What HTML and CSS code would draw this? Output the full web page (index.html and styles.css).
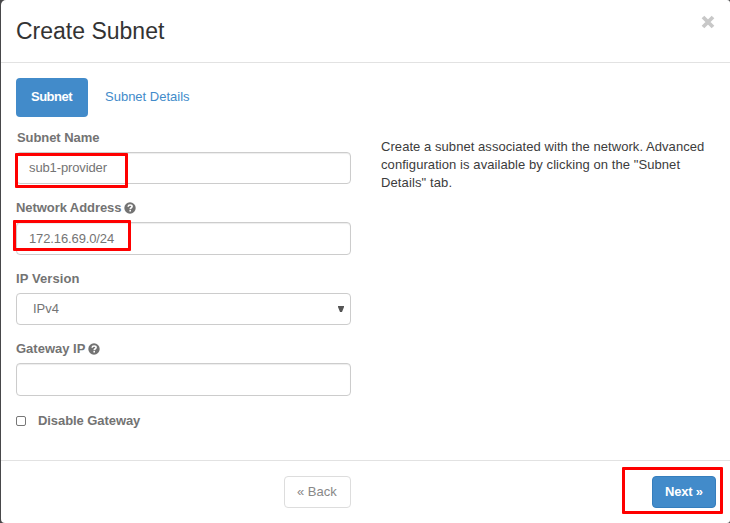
FILE: index.html
```html
<!DOCTYPE html>
<html lang="en">
<head>
<meta charset="utf-8">
<title>Create Subnet</title>
<link rel="stylesheet" href="styles.css">
</head>
<body>
<svg class="defs" width="0" height="0" aria-hidden="true">
  <symbol id="help" viewBox="0 0 12 12">
    <circle cx="6" cy="6" r="5.7" fill="currentColor"/>
    <path d="M4.100 4.700C4.200 3.500 5 3 6.100 3c1.200 0 2 .7 2 1.600C8.100 5.900 6.200 5.700 6.200 7.200M6.200 8v1.500" fill="none" stroke="#fff" stroke-width="1.600"/>
  </symbol>
</svg>
<div class="modal">
  <header class="modal-header">
    <h1 class="title"><span>Create Subnet</span></h1>
    <svg class="close" viewBox="0 0 14 14" role="img"><path d="M2 2l10 10M12 2l-10 10"/></svg>
  </header>
  <main class="modal-body">
    <nav class="tabs">
      <a class="tab active"><span>Subnet</span></a>
      <a class="tab"><span>Subnet Details</span></a>
    </nav>
    <div class="columns">
      <form class="form">
        <div class="group">
          <label class="label first"><span class="t-name">Subnet Name</span></label>
          <div class="field"><span class="t-sub">sub1-provider</span><i class="mark mark-name"></i></div>
        </div>
        <div class="group tall">
          <label class="label"><span class="t-net">Network Address</span><svg class="help"><use href="#help"/></svg></label>
          <div class="field addr"><span class="t-addr">172.16.69.0/24</span><i class="mark mark-addr"></i></div>
        </div>
        <div class="group">
          <label class="label"><span class="t-ver">IP Version</span></label>
          <div class="field select"><span class="t-ipv">IPv4</span><svg class="arrow" viewBox="0 0 6 6"><path d="M0 0h6v1L4 6H2L0 1z"/></svg></div>
        </div>
        <div class="group tall">
          <label class="label"><span class="t-gw">Gateway IP</span><svg class="help"><use href="#help"/></svg></label>
          <div class="field"></div>
        </div>
        <div class="check"><i class="box"></i><span class="t-dis">Disable Gateway</span></div>
      </form>
      <div class="info">
        <div><span class="t-i1">Create a subnet associated with the network. Advanced</span></div>
        <div><span class="t-i2">configuration is available by clicking on the "Subnet</span></div>
        <div><span class="t-i3">Details" tab.</span></div>
      </div>
    </div>
  </main>
  <footer class="modal-footer">
    <div class="btn back"><span>« Back</span></div>
    <div class="btn next"><span class="t-next">Next »</span><i class="mark mark-next"></i></div>
  </footer>
</div>
</body>
</html>
```
FILE: styles.css
```css
* { box-sizing: border-box; }
body {
  margin: 0;
  height: 523px;
  overflow: hidden;
  background: #48484a;
  font: 13px/18px "Liberation Sans", Arial, sans-serif;
  color: #3c3c3c;
}
span { white-space: nowrap; }
.defs { position: absolute; }
.modal {
  margin-left: 1px;
  height: 523px;
  background: #fff;
  border-radius: 5px 3px 3px 4px;
  display: flex;
  flex-direction: column;
}
.modal-header {
  height: 63px;
  flex: none;
  display: flex;
  justify-content: space-between;
  padding: 15px 15px 0 15px;
  border-bottom: 1px solid #e2e2e2;
}
.title { margin: 0; font-size: 23px; line-height: 32px; font-weight: 400; color: #333; }
.close { width: 14px; height: 14px; stroke: #c8c8c8; stroke-width: 3.8; fill: none; }
.modal-body { height: 397px; flex: none; padding: 15px 15px 0; }
.tabs { display: flex; gap: 2px; height: 39px; }
.tab { color: #428bca; padding: 10px 15px; border-radius: 4px; }
.tab.active { width: 72px; background: #428bca; color: #fff; font-weight: 700; letter-spacing: -.5px; }
.columns { display: flex; gap: 30px; }
.form { width: 335px; padding-top: 12px; }
.group { height: 70px; }
.group.tall { height: 71px; }
.label { display: flex; align-items: center; height: 23px; padding-bottom: 5px; font-weight: 700; color: #737373; }
.label.first { padding-left: 1px; }
.help { width: 12px; height: 12px; margin-left: 3px; }
.field {
  position: relative;
  display: flex;
  align-items: center;
  height: 32px;
  padding: 0 12px 1px;
  border: 1px solid #ccc;
  border-radius: 4px;
  box-shadow: inset 0 1px 1px rgba(0,0,0,.075);
  color: #747474;
}
.tall .field { height: 33px; }
.field.addr { padding: 1px 12px 0; }
.select { padding: 0 6px 0 16px; justify-content: space-between; box-shadow: none; }
.arrow { width: 6px; height: 6px; fill: #555; }
.check { display: flex; align-items: center; height: 18px; margin-top: 1px; font-weight: 700; color: #737373; }
.box { width: 10px; height: 10px; border: 1px solid #777; border-radius: 2px; margin: -1px 12px 0 0; }
.info { padding-top: 21px; }
.t-name, .t-net, .t-dis { letter-spacing: -.07px; }
.t-sub, .t-addr { letter-spacing: -.12px; }
.t-ver { letter-spacing: .1px; }
.t-i1 { letter-spacing: .06px; }
.t-i2 { letter-spacing: .075px; }
.t-i3 { letter-spacing: .12px; }
.t-next { letter-spacing: -.2px; }
.modal-footer {
  height: 63px;
  border-top: 1px solid #e2e2e2;
  display: flex;
  justify-content: space-between;
  padding: 15px 14px 0 283px;
}
.btn {
  position: relative;
  height: 32px;
  padding: 6px 12px;
  border: 1px solid #ddd;
  border-radius: 4px;
  color: #888;
}
.back { width: 67px; }
.next { width: 64px; background: #428bca; border-color: #357ebd; color: #fff; font-weight: 700; }
.mark { position: absolute; border: 3px solid #fe0000; border-radius: 1px; }
.mark-name { left: -2px; top: 0; width: 113px; height: 35px; }
.mark-addr { left: -4px; top: -3px; width: 118px; height: 31px; }
.mark-next { left: -31px; top: -10px; width: 101px; height: 47px; }
```
